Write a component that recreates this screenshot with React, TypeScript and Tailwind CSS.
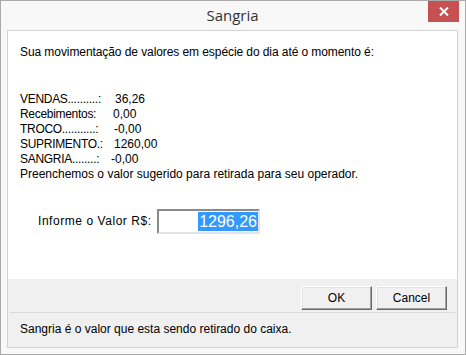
import React from "react";

const rows = [
  { label: "VENDAS..........:", value: "36,26", w: "w-[95px]" },
  { label: "Recebimentos:", value: "0,00", w: "w-[93px]" },
  { label: "TROCO...........:", value: "-0,00", w: "w-[94px]" },
  { label: "SUPRIMENTO.:", value: "1260,00", w: "w-[94px]" },
  { label: "SANGRIA........:", value: "-0,00", w: "w-[91px]" },
];

function WinButton({ children }: { children: React.ReactNode }) {
  return (
    <button className="w-[71px] h-[24px] bg-[#f0f0f0] border border-t-white border-l-white border-r-[#696969] border-b-[#696969] shadow-[inset_-1px_-1px_0_#a0a0a0,inset_1px_1px_0_#e3e3e3] text-[12px] text-black">
      {children}
    </button>
  );
}

export default function App() {
  return (
    <div
      className="w-[466px] h-[355px] border border-[#aaaaaa] bg-[#f8f8f8] flex flex-col pl-[6px] pr-[7px] pb-[6px]"
      style={{ fontFamily: '"Liberation Sans", Arial, sans-serif' }}
    >
      <div className="h-[29px] relative flex items-center justify-center shrink-0">
        <span className="text-[15px] text-[#333333] -mt-[1px]" style={{ fontFamily: '"Open Sans", "Noto Sans", sans-serif' }}>
          Sangria
        </span>
        <div className="absolute right-[-1px] top-0 w-[31px] h-[21px] bg-[#c75050] flex items-center justify-center">
          <svg width="10" height="9" viewBox="0 0 10 9">
            <path d="M1 0.5 L9 8.5 M9 0.5 L1 8.5" stroke="white" strokeWidth="2" />
          </svg>
        </div>
      </div>
      <div className="flex-1 border border-[#d2d2d2] flex flex-col text-[12px] text-black">
        <div className="h-[248px] bg-white pl-[12px] pt-[14px] leading-[15px]">
          <div className="tracking-[-0.08px]">Sua movimentação de valores em espécie do dia até o momento é:</div>
          <div className="mt-[32px]">
            {rows.map((r) => (
              <div key={r.label} className="flex">
                <span className={`${r.w} whitespace-nowrap tracking-[-0.3px]`}>{r.label}</span>
                <span>{r.value}</span>
              </div>
            ))}
            <div>Preenchemos o valor sugerido para retirada para seu operador.</div>
          </div>
          <div className="mt-[27px] flex items-center pl-[18px]">
            <span className="w-[119px] tracking-[0.55px]">Informe o Valor R$:</span>
            <div className="w-[103px] h-[25px] border-2 border-t-[#8a8a8a] border-l-[#8a8a8a] border-r-[#e3e3e3] border-b-[#e3e3e3] flex items-center justify-end">
              <span className="bg-[#3399ff] text-white text-[16px] leading-[19px] px-[1px]">1296,26</span>
            </div>
          </div>
        </div>
        <div className="flex-1 bg-[#f0f0f0] flex flex-col">
          <div className="flex justify-end gap-[4px] pt-[7px] pr-[10px]">
            <WinButton>OK</WinButton>
            <WinButton>Cancel</WinButton>
          </div>
          <div className="mx-[2px] mt-[2px] h-[2px] border-t border-[#dadada] border-b-white" />
          <div className="pl-[12px] pt-[8px] leading-[15px]">Sangria é o valor que esta sendo retirado do caixa.</div>
        </div>
      </div>
    </div>
  );
}
